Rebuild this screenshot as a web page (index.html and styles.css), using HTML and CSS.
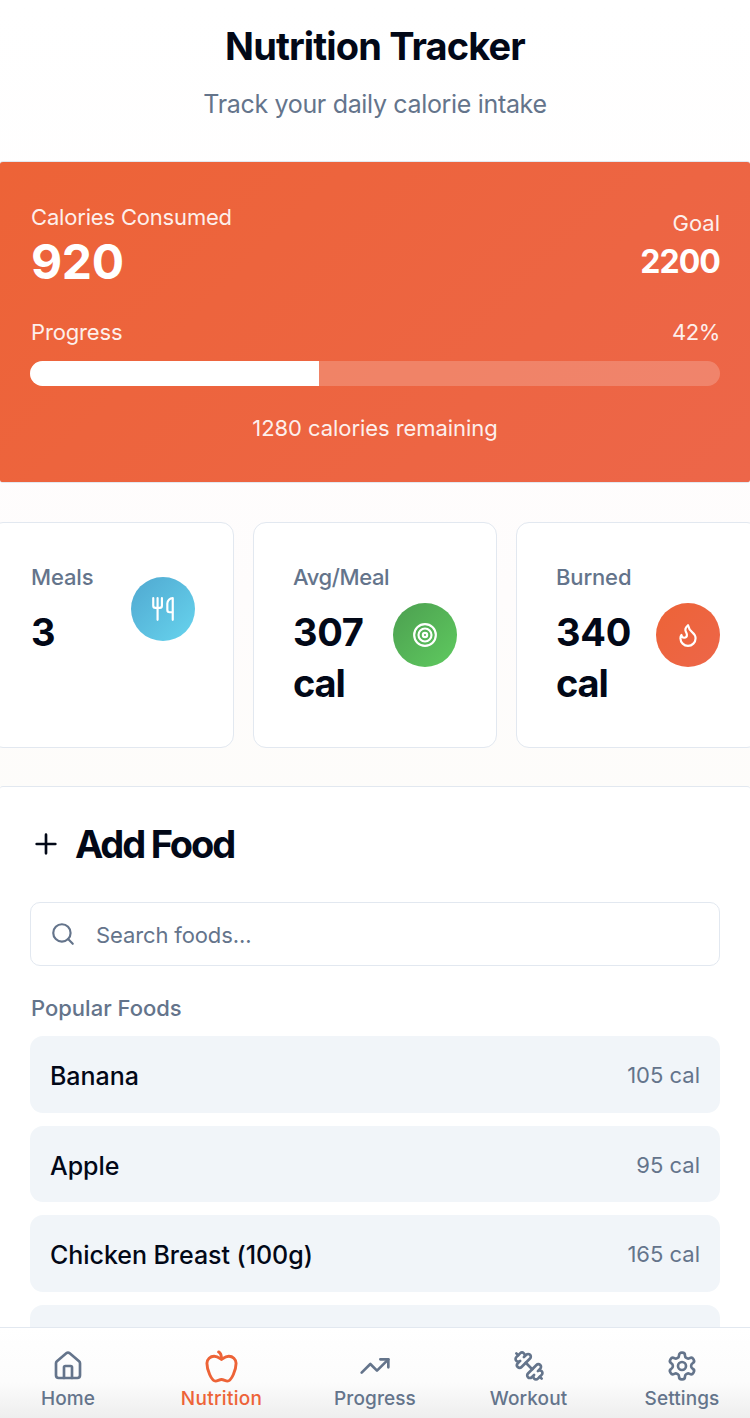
FILE: index.html
```html
<!DOCTYPE html>
<html lang="en">
<head>
<meta charset="utf-8">
<meta name="viewport" content="width=device-width, initial-scale=1">
<title>Nutrition Tracker</title>
<link rel="stylesheet" href="styles.css">
</head>
<body>
<div class="app">
  <main class="content">
    <header class="header">
      <h1 class="title">Nutrition Tracker</h1>
      <p class="subtitle">Track your daily calorie intake</p>
    </header>

    <section class="summary">
      <div class="summary-top">
        <div>
          <p class="label consumed-label">Calories Consumed</p>
          <p class="consumed">920</p>
        </div>
        <div class="goal">
          <p class="label">Goal</p>
          <p class="goal-value">2200</p>
        </div>
      </div>
      <div class="progress-row">
        <span class="label progress-label">Progress</span>
        <span class="label percent">42%</span>
      </div>
      <div class="track"><div class="fill" style="width: 41.85%"></div></div>
      <p class="label remaining">1280 calories remaining</p>
    </section>

    <section class="stats">
      <article class="stat">
        <div class="stat-text">
          <p class="stat-label">Meals</p>
          <p class="stat-value">3</p>
        </div>
        <div class="badge blue">
          <svg class="icon" viewBox="0 0 24 24"><path d="M3 2v7c0 1.1.9 2 2 2h4a2 2 0 0 0 2-2V2M7 2v20M21 15V2a5 5 0 0 0-5 5v6c0 1.1.9 2 2 2h3Zm0 0v7"/></svg>
        </div>
      </article>
      <article class="stat">
        <div class="stat-text">
          <p class="stat-label avg-label">Avg/Meal</p>
          <p class="stat-value">307<br><span class="unit">cal</span></p>
        </div>
        <div class="badge green">
          <svg class="icon" viewBox="0 0 24 24"><circle cx="12" cy="12" r="10"/><circle cx="12" cy="12" r="6"/><circle cx="12" cy="12" r="2"/></svg>
        </div>
      </article>
      <article class="stat">
        <div class="stat-text">
          <p class="stat-label">Burned</p>
          <p class="stat-value">340<br><span class="unit">cal</span></p>
        </div>
        <div class="badge orange">
          <svg class="icon" viewBox="0 0 24 24"><path d="M8.5 14.5A2.5 2.5 0 0 0 11 12c0-1.38-.5-2-1-3-1.072-2.143-.224-4.054 2-6 .5 2.5 2 4.9 4 6.5 2 1.6 3 3.5 3 5.5a7 7 0 1 1-14 0c0-1.153.433-2.294 1-3a2.5 2.5 0 0 0 2.5 2.5z"/></svg>
        </div>
      </article>
    </section>

    <section class="add-food">
      <h2 class="section-title">
        <svg class="plus" viewBox="0 0 24 24"><path d="M5 12h14M12 5v14"/></svg>
        <span>Add Food</span>
      </h2>
      <div class="search">
        <svg class="search-icon" viewBox="0 0 24 24"><circle cx="11" cy="11" r="8"/><path d="m21 21-4.3-4.3"/></svg>
        <span class="placeholder">Search foods...</span>
      </div>
      <h3 class="popular">Popular Foods</h3>
      <ul class="foods">
        <li class="food"><span class="food-name">Banana</span><span class="food-cal">105 cal</span></li>
        <li class="food"><span class="food-name">Apple</span><span class="food-cal">95 cal</span></li>
        <li class="food"><span class="food-name">Chicken Breast (100g)</span><span class="food-cal">165 cal</span></li>
        <li class="food"></li>
      </ul>
    </section>
  </main>

  <nav class="nav">
    <a class="tab">
      <span class="tab-icon"><svg viewBox="0 0 24 24"><path d="M15 21v-8a1 1 0 0 0-1-1h-4a1 1 0 0 0-1 1v8"/><path d="M3 10a2 2 0 0 1 .709-1.528l7-5.999a2 2 0 0 1 2.582 0l7 5.999A2 2 0 0 1 21 10v9a2 2 0 0 1-2 2H5a2 2 0 0 1-2-2z"/></svg></span>
      <span>Home</span>
    </a>
    <a class="tab active">
      <span class="tab-icon"><svg viewBox="0 0 24 24"><path d="M12 20.94c1.500 0 2.750 1.060 4 1.060 3 0 6-8 6-12.220A4.910 4.910 0 0 0 17 5c-2.220 0-4 1.440-5 2-1-.56-2.780-2-5-2a4.900 4.900 0 0 0-5 4.780C2 14 5 22 8 22c1.250 0 2.500-1.060 4-1.060Z"/><path d="M10 2c1 .5 2 2 2 5"/></svg></span>
      <span>Nutrition</span>
    </a>
    <a class="tab">
      <span class="tab-icon"><svg viewBox="0 0 24 24"><path d="m22 7-8.500 8.500-5-5L2 17"/><path d="M16 7h6v6"/></svg></span>
      <span>Progress</span>
    </a>
    <a class="tab">
      <span class="tab-icon"><svg viewBox="0 0 24 24"><path d="M14.4 14.4 9.600 9.600"/><path d="M18.657 21.485a2 2 0 1 1-2.829-2.828l-1.767 1.768a2 2 0 1 1-2.829-2.829l6.364-6.364a2 2 0 1 1 2.829 2.829l-1.768 1.767a2 2 0 1 1 2.828 2.829z"/><path d="m21.500 21.500-1.400-1.400M3.900 3.900 2.500 2.500"/><path d="M6.404 12.768a2 2 0 1 1-2.829-2.829l1.768-1.767a2 2 0 1 1-2.828-2.829l2.828-2.828a2 2 0 1 1 2.829 2.828l1.767-1.768a2 2 0 1 1 2.829 2.829z"/></svg></span>
      <span>Workout</span>
    </a>
    <a class="tab">
      <span class="tab-icon"><svg viewBox="0 0 24 24"><path d="M12.220 2h-.44a2 2 0 0 0-2 2v.18a2 2 0 0 1-1 1.730l-.43.25a2 2 0 0 1-2 0l-.15-.08a2 2 0 0 0-2.730.73l-.22.38a2 2 0 0 0 .73 2.730l.15.1a2 2 0 0 1 1 1.720v.51a2 2 0 0 1-1 1.740l-.15.09a2 2 0 0 0-.73 2.730l.22.38a2 2 0 0 0 2.730.73l.15-.08a2 2 0 0 1 2 0l.43.25a2 2 0 0 1 1 1.730V20a2 2 0 0 0 2 2h.44a2 2 0 0 0 2-2v-.18a2 2 0 0 1 1-1.730l.43-.25a2 2 0 0 1 2 0l.15.08a2 2 0 0 0 2.730-.73l.22-.39a2 2 0 0 0-.73-2.730l-.15-.08a2 2 0 0 1-1-1.740v-.5a2 2 0 0 1 1-1.740l.15-.09a2 2 0 0 0 .73-2.730l-.22-.38a2 2 0 0 0-2.730-.73l-.15.08a2 2 0 0 1-2 0l-.43-.25a2 2 0 0 1-1-1.730V4a2 2 0 0 0-2-2z"/><circle cx="12" cy="12" r="3"/></svg></span>
      <span>Settings</span>
    </a>
  </nav>
</div>
</body>
</html>
```
FILE: styles.css
```css
* { box-sizing: border-box; margin: 0; padding: 0; }

body {
  font-family: Inter, "Liberation Sans", sans-serif;
  font-size: 25px;
  color: #020817;
  background: #fff;
}

svg {
  fill: none;
  stroke: currentColor;
  stroke-width: 2;
  stroke-linecap: round;
  stroke-linejoin: round;
  flex: none;
  display: block;
}

.app {
  height: 1418px;
  display: flex;
  flex-direction: column;
  overflow: hidden;
}

.content {
  flex: 1;
  min-height: 0;
  overflow: hidden;
  background: linear-gradient(#fff, #fefcfc 45%, #fdfcfa 60%);
}

/* Header */
.header { height: 161px; padding-top: 21px; text-align: center; }
.title { font-size: 38px; line-height: 51px; font-weight: 700; letter-spacing: -0.87px; }
.subtitle { margin-top: 13px; font-size: 25px; line-height: 38px; letter-spacing: -0.33px; color: #64748b; }

/* Calorie summary */
.summary {
  height: 322px;
  padding: 39px 30px 0;
  border-top: 1px solid #e2e8f0;
  border-bottom: 1px solid #e2e8f0;
  border-radius: 3px;
  color: #fff;
  background: linear-gradient(135deg, #ed6337, #ed6649);
}
.summary-top { display: flex; justify-content: space-between; align-items: flex-start; height: 84px; }
.label { font-size: 22px; line-height: 32px; opacity: .9; }
.consumed-label { padding-left: 1px; letter-spacing: -0.18px; }
.consumed { padding-left: 1px; font-size: 48px; line-height: 58px; font-weight: 700; letter-spacing: -0.3px; }
.goal { padding-top: 6px; text-align: right; }
.goal-value { font-size: 32px; line-height: 45px; font-weight: 700; letter-spacing: -0.9px; }
.progress-row { display: flex; justify-content: space-between; margin-top: 31px; }
.progress-label { padding-left: 1px; letter-spacing: -0.15px; }
.percent { letter-spacing: -0.4px; }
.track { height: 25px; margin-top: 13px; border-radius: 13px; overflow: hidden; background: rgba(255, 255, 255, .2); }
.fill { height: 100%; background: #fff; }
.remaining { margin-top: 26px; text-align: center; letter-spacing: -0.06px; }

/* Stat cards */
.stats { display: grid; grid-template-columns: repeat(3, 1fr); gap: 19px; margin: 39px -10px 38px; }
.stat {
  height: 226px;
  padding: 38px 39px 38px 38px;
  display: flex;
  justify-content: space-between;
  align-items: flex-start;
  border: 1px solid #e2e8f0;
  border-radius: 13px;
  background: #fff;
}
.stat:first-child { padding-right: 38px; padding-left: 39px; }
.stat-text { padding-left: 1px; }
.stat-label { font-size: 22px; line-height: 32px; font-weight: 500; letter-spacing: -0.15px; color: #64748b; }
.avg-label { letter-spacing: -0.4px; }
.stat-value { margin-top: 14px; font-size: 38px; line-height: 51px; font-weight: 700; letter-spacing: -0.3px; }
.unit { letter-spacing: -1.2px; }
.badge { flex: none; width: 64px; height: 64px; margin-top: 42px; border-radius: 50%; display: grid; place-items: center; color: #fff; }
.blue { margin-top: 16px; background: linear-gradient(135deg, #50a8d0, #67d4ee); }
.green { background: linear-gradient(135deg, #4c9f50, #5fca5f); }
.orange { background: linear-gradient(135deg, #ed6337, #ed6649); }
.icon { width: 26px; height: 26px; }

/* Add food */
.add-food { padding: 31px 30px 0; border-top: 1px solid #e2e8f0; border-radius: 3px; background: #fff; }
.section-title { display: flex; align-items: center; gap: 13px; height: 51px; font-size: 38px; font-weight: 700; letter-spacing: -2.15px; }
.plus { width: 32px; height: 32px; }
.search { display: flex; align-items: center; height: 64px; margin-top: 33px; padding-left: 19px; gap: 20px; border: 1px solid #e2e8f0; border-radius: 10px; color: #64748b; }
.search-icon { width: 26px; height: 26px; }
.placeholder { padding-top: 2px; font-size: 22px; letter-spacing: -0.12px; }
.popular { padding-left: 1px; margin-top: 26px; font-size: 22px; line-height: 32px; font-weight: 500; color: #64748b; }
.foods { list-style: none; display: grid; gap: 13px; margin-top: 12.3px; }
.food { height: 76.6px; padding: 0 20px; display: flex; align-items: center; justify-content: space-between; border-radius: 13px; background: #f1f5f9; }
.food-name { padding-top: 3px; font-size: 25px; font-weight: 500; letter-spacing: -0.05px; }
.food-cal { padding-top: 1px; font-size: 22px; color: #64748b; }

/* Bottom navigation */
.nav {
  flex: none;
  height: 91px;
  padding: 20px 0 0;
  display: flex;
  justify-content: space-between;
  border-top: 1px solid #e2e8f0;
  background: linear-gradient(#fff, #fcfcfc 60%, #eee);
}
.tab { width: 136px; display: flex; flex-direction: column; align-items: center; font-size: 19px; line-height: 26px; font-weight: 500; letter-spacing: 0.1px; color: #64748b; }
.tab-icon { height: 36px; margin-bottom: 2px; display: grid; place-items: center; }
.tab-icon svg { width: 32px; height: 32px; }
.active { color: #ed6337; letter-spacing: 0.3px; }
.active .tab-icon svg { width: 35px; height: 35px; }
```
